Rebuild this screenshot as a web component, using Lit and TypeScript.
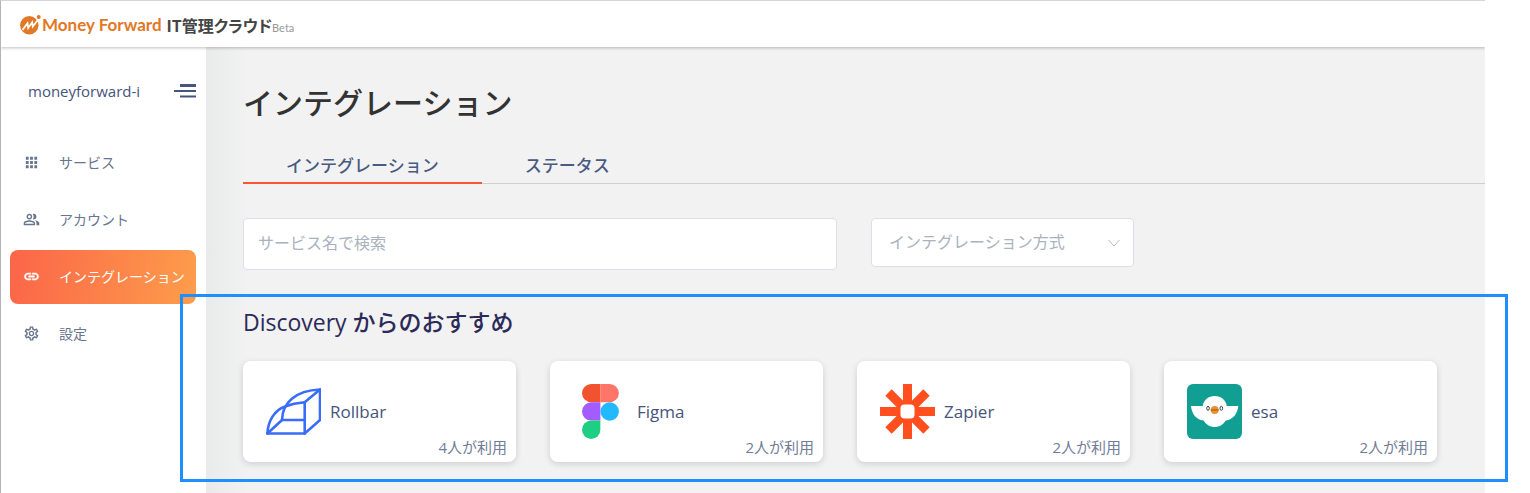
import { LitElement, html, css, svg } from "lit";
import { customElement, state } from "lit/decorators.js";
import { classMap } from "lit/directives/class-map.js";

const icons = {
  grid: svg`<path d="M4 8h4V4H4v4zm6 12h4v-4h-4v4zm-6 0h4v-4H4v4zm0-6h4v-4H4v4zm6 0h4v-4h-4v4zm6-10v4h4V4h-4zm-6 4h4V4h-4v4zm6 6h4v-4h-4v4zm0 6h4v-4h-4v4z"/>`,
  people: svg`<path d="M16.67 13.13C18.04 14.06 19 15.32 19 17v3h4v-3c0-2.18-3.57-3.47-6.33-3.87zM15 12c2.21 0 4-1.79 4-4s-1.79-4-4-4c-.47 0-.91.1-1.33.24C14.5 5.27 15 6.58 15 8s-.5 2.73-1.33 3.76c.42.14.86.24 1.33.24zM9 12c2.21 0 4-1.79 4-4s-1.79-4-4-4-4 1.79-4 4 1.79 4 4 4zm0-6c1.1 0 2 .9 2 2s-.9 2-2 2-2-.9-2-2 .9-2 2-2zm0 7c-2.67 0-8 1.34-8 4v3h16v-3c0-2.66-5.33-4-8-4zm6 5H3v-.99C3.2 16.29 6.3 15 9 15s5.8 1.29 6 2v1z"/>`,
  link: svg`<path stroke="currentColor" stroke-width=".7" d="M3.900 12c0-1.710 1.390-3.100 3.100-3.100h4V7H7c-2.760 0-5 2.240-5 5s2.240 5 5 5h4v-1.900H7c-1.710 0-3.100-1.390-3.100-3.100zM8 13h8v-2H8v2zm9-6h-4v1.900h4c1.710 0 3.100 1.390 3.100 3.100s-1.390 3.100-3.100 3.100h-4V17h4c2.760 0 5-2.240 5-5s-2.240-5-5-5z"/>`,
  gear: svg`<path d="M19.430 12.980c.04-.32.07-.64.07-.98s-.03-.66-.07-.98l2.110-1.650c.19-.15.24-.42.12-.64l-2-3.460c-.12-.22-.39-.3-.61-.22l-2.490 1c-.52-.4-1.080-.73-1.690-.98l-.38-2.650C14.460 2.180 14.250 2 14 2h-4c-.25 0-.46.18-.49.42l-.38 2.650c-.61.25-1.170.59-1.690.98l-2.490-1c-.23-.09-.49 0-.61.22l-2 3.460c-.13.22-.07.49.12.64l2.110 1.650c-.04.32-.07.65-.07.98s.03.66.07.98l-2.110 1.650c-.19.15-.24.42-.12.64l2 3.460c.12.22.39.3.61.22l2.490-1c.52.4 1.080.73 1.690.98l.38 2.650c.03.24.24.42.49.42h4c.25 0 .46-.18.49-.42l.38-2.650c.61-.25 1.170-.59 1.690-.98l2.490 1c.23.09.49 0 .61-.22l2-3.460c.12-.22.07-.49-.12-.64l-2.110-1.650zm-1.980-1.710c.04.31.05.52.05.73 0 .21-.02.43-.05.73l-.14 1.130.89.7 1.080.84-.7 1.210-1.270-.51-1.040-.42-.9.68c-.43.32-.84.56-1.250.73l-1.060.43-.16 1.130-.2 1.350h-1.400l-.19-1.350-.16-1.130-1.060-.43c-.43-.18-.83-.41-1.230-.71l-.91-.7-1.060.43-1.270.51-.7-1.210 1.080-.84.89-.7-.14-1.130c-.03-.31-.05-.54-.05-.74s.02-.43.05-.73l.14-1.130-.89-.7-1.080-.84.7-1.210 1.270.51 1.040.42.9-.68c.43-.32.84-.56 1.250-.73l1.060-.43.16-1.130.2-1.350h1.390l.19 1.350.16 1.130 1.060.43c.43.18.83.41 1.230.71l.91.7 1.060-.43 1.270-.51.7 1.210-1.070.85-.89.7.14 1.130zM12 8c-2.210 0-4 1.790-4 4s1.790 4 4 4 4-1.790 4-4-1.790-4-4-4zm0 6c-1.100 0-2-.9-2-2s.9-2 2-2 2 .9 2 2-.9 2-2 2z"/>`,
};

const logos = {
  rollbar: svg`<g fill="none" stroke="#3a6cfb" stroke-width="2.600" stroke-linejoin="round" stroke-linecap="round">
      <path d="M1.400 49.500C2 37 8.500 26 19 22.500 25 20.300 31.500 19 38.700 18.300V49.500Z"/>
      <path d="M16 36C16.500 19 29 6.500 54 5.500V36L38.700 49.500"/>
      <path d="M38.700 18.300 54 5.500M1.400 49.500 16 36H38.700"/>
    </g>`,
  figma: svg`<g transform="translate(-3 0)">
      <path fill="#f0532d" d="M27.500 0H21.200a9.150 9.150 0 0 0 0 18.300H30.400V0Z"/>
      <path fill="#ff7568" d="M30.400 0H39.700a9.150 9.150 0 0 1 0 18.300H30.400Z"/>
      <path fill="#a35cff" d="M30.400 18.300H21.200a9.150 9.150 0 0 0 0 18.300H30.400Z"/>
      <circle fill="#22b9ff" cx="39.700" cy="27.450" r="9.200"/>
      <path fill="#1ecf83" d="M30.400 36.600H21.200a9.200 9.200 0 1 0 9.200 9.200Z"/>
    </g>`,
  zapier: svg`<g stroke="#ff4f1f" stroke-width="9">
      <path d="M27.500 0V55M0 27.500H55M8.500 8.500 46.500 46.500M46.500 8.500 8.500 46.500"/>
    </g>
    <rect x="17" y="17" width="21" height="21" fill="#ff4f1f"/>
    <rect x="20.500" y="20.500" width="14" height="14" rx="4" fill="#fff"/>`,
  esa: svg`<rect width="55" height="55" rx="6" fill="#119f94"/>
    <path fill="#fff" d="M4 22H15.800C16.500 16 21.500 12 27.700 12S39 16 39.700 22H51.300C50.500 30 46 35.500 38.800 36.500 36 41 32 43 27.700 43S19.500 41 16.500 36.500C9 35.500 4.800 30 4 22Z"/>
    <g fill="none" stroke="#444" stroke-width="1">
      <ellipse cx="21" cy="24.300" rx="1.300" ry="2"/>
      <ellipse cx="34.300" cy="24.300" rx="1.300" ry="2"/>
    </g>
    <circle cx="27.700" cy="26" r="4" fill="#f09030"/>
    <path d="M23.700 26H31.700" stroke="#8a5a20" stroke-width="1"/>`,
};

type IconName = keyof typeof icons;
type LogoName = keyof typeof logos;

@customElement("service-card")
class ServiceCard extends LitElement {
  static properties = {
    name: { type: String },
    logo: { type: String },
    users: { type: Number },
  };
  declare name: string;
  declare logo: LogoName;
  declare users: number;

  static styles = css`
    :host {
      display: block;
      min-width: 0;
    }
    .card {
      display: block;
      padding: 23px 9px 7px 23px;
      border-radius: 8px;
      background: #fff;
      box-shadow: 0 2px 6px rgba(40, 50, 70, 0.18);
      color: #45557c;
      text-decoration: none;
    }
    .head {
      display: flex;
      align-items: center;
      gap: 9px;
    }
    .logo {
      width: 55px;
      height: 55px;
      flex: none;
    }
    .name {
      font-size: 17px;
      line-height: 24px;
    }
    .users {
      display: block;
      color: #717d98;
      font-size: 15px;
      line-height: 16px;
      text-align: right;
    }
  `;

  render() {
    return html`<a class="card" href="#">
      <span class="head">
        <svg class="logo" viewBox="0 0 55 55" aria-hidden="true">${logos[this.logo]}</svg>
        <span class="name">${this.name}</span>
      </span>
      <span class="users">${this.users}人が利用</span>
    </a>`;
  }
}

@customElement("app-root")
class AppRoot extends LitElement {
  @state() private tab = 0;

  private nav: { icon: IconName; label: string; active?: boolean }[] = [
    { icon: "grid", label: "サービス" },
    { icon: "people", label: "アカウント" },
    { icon: "link", label: "インテグレーション", active: true },
    { icon: "gear", label: "設定" },
  ];

  private services: { name: string; logo: LogoName; users: number }[] = [
    { name: "Rollbar", logo: "rollbar", users: 4 },
    { name: "Figma", logo: "figma", users: 2 },
    { name: "Zapier", logo: "zapier", users: 2 },
    { name: "esa", logo: "esa", users: 2 },
  ];

  static styles = css`
    :host {
      display: block;
      position: relative;
      box-sizing: border-box;
      min-height: 100vh;
      padding-right: 45px;
      background: #fff;
      font-family: "Open Sans", "Noto Sans CJK JP", sans-serif;
    }
    *,
    *::before {
      box-sizing: border-box;
    }
    .window {
      display: flex;
      flex-direction: column;
      min-height: 100vh;
      overflow: hidden;
      border-top: 1px solid #d5d5db;
      border-left: 1px solid #b4b4b8;
    }
    .topbar {
      position: relative;
      display: flex;
      align-items: center;
      height: 46px;
      padding: 2px 19px 0;
      background: #fff;
      box-shadow: 0 1px 3px rgba(0, 0, 0, 0.25);
    }
    .brand {
      display: flex;
      align-items: center;
      color: #e27826;
      text-decoration: none;
    }
    .mark {
      width: 22px;
      height: 20px;
    }
    .brand-name {
      font: 700 17px/24px Lato, sans-serif;
    }
    .product {
      margin-left: 5px;
      color: #444;
      font: 700 16px/24px "Noto Sans CJK JP", sans-serif;
      font-feature-settings: "palt";
    }
    .beta {
      padding-top: 6px;
      color: #999;
      font: 400 11px/16px Lato, sans-serif;
    }
    .body {
      display: flex;
      flex: 1;
    }
    .sidebar {
      flex: none;
      width: 205px;
      padding: 30px 10px 0 9px;
      background: #fff;
    }
    .tenant {
      display: flex;
      align-items: center;
      justify-content: space-between;
      height: 28px;
      margin: 0 0 31px;
      padding-left: 18px;
      color: #45557c;
      font-size: 15px;
    }
    .toggle {
      width: 22px;
      height: 16px;
      padding: 0;
      border: 0;
      background: none;
      color: #45557c;
    }
    .toggle svg {
      display: block;
    }
    .nav {
      display: flex;
      flex-direction: column;
      gap: 3px;
    }
    .item {
      display: flex;
      align-items: center;
      gap: 19px;
      height: 54px;
      padding: 0 0 2px 13px;
      border-radius: 8px;
      color: #68758f;
      font-size: 14px;
      text-decoration: none;
      white-space: nowrap;
    }
    .item.active {
      background: linear-gradient(100deg, #fb6549, #fd9d4b);
      color: #fff;
    }
    .item svg {
      width: 17px;
      height: 17px;
      fill: currentColor;
    }
    .main {
      flex: 1;
      min-width: 0;
      padding: 34px 0 31px 37px;
      background: linear-gradient(90deg, #e9ebeb, #f2f2f2 44px);
    }
    .title {
      margin: 0;
      color: #333;
      font-size: 30px;
      font-weight: 500;
      line-height: 44px;
    }
    .tabs {
      display: flex;
      margin-top: 23px;
      box-shadow: inset 0 -1px #cfcfcf;
    }
    .tab {
      height: 36px;
      padding: 2px 43px 0;
      border: 0;
      border-bottom: 2px solid transparent;
      background: none;
      color: #4a5a82;
      font: inherit;
      font-size: 17px;
      font-weight: 500;
      line-height: 32px;
    }
    .tab.active {
      border-color: #ff5533;
    }
    .content {
      padding-right: 48px;
    }
    .filters {
      display: grid;
      grid-template-columns: minmax(0, 594px) 263px;
      align-items: start;
      gap: 34px;
      margin-top: 34px;
    }
    .search,
    .method {
      width: 100%;
      border: 1px solid #dcdfe6;
      border-radius: 4px;
      background: #fff;
      color: #a9b2be;
      font: inherit;
      font-size: 16px;
    }
    .search {
      height: 52px;
      padding: 0 14px 2px;
    }
    .search::placeholder {
      color: #a9b2be;
      opacity: 1;
    }
    .select {
      display: grid;
      align-items: center;
    }
    .select > * {
      grid-area: 1 / 1;
    }
    .method {
      height: 49px;
      padding: 0 17px 2px;
      appearance: none;
    }
    .chevron {
      justify-self: end;
      width: 12px;
      height: 8px;
      margin-right: 14px;
      fill: none;
      stroke: #b4bac6;
      pointer-events: none;
    }
    .section {
      margin: 36px 0 23px;
      color: #2b2a58;
      font-size: 23px;
      font-weight: 500;
      line-height: 32px;
    }
    .cards {
      display: grid;
      grid-template-columns: repeat(4, minmax(0, 1fr));
      gap: 34px;
    }
    .highlight {
      position: absolute;
      top: 294px;
      right: 22px;
      bottom: 11px;
      left: 180px;
      border: 3px solid #1e8fff;
      pointer-events: none;
    }
  `;

  render() {
    return html`
      <div class="window">
        <header class="topbar">
          <a class="brand" href="#">
            <svg class="mark" viewBox="0 0 22 20" aria-hidden="true">
              <circle cx="9.300" cy="10.200" r="9.200" fill="currentColor" />
              <circle cx="18.700" cy="2" r="3.200" fill="#fff" />
              <circle cx="18.700" cy="2" r="2" fill="currentColor" />
              <path d="M2.500 15 7.500 8.200 8.200 13 12.200 7.300 12.800 11.500 17.500 5.500" fill="none" stroke="#fff" stroke-width="1.800" />
            </svg>
            <span class="brand-name">Money Forward</span>
            <span class="product">IT管理クラウド</span>
            <span class="beta">Beta</span>
          </a>
        </header>
        <div class="body">
          <aside class="sidebar">
            <div class="tenant">
              <span>moneyforward-i</span>
              <button class="toggle" aria-label="メニュー">
                <svg width="22" height="16" viewBox="0 0 22 16" fill="currentColor">
                  <path d="M6 1H22V4H6ZM0 7H22V9H0ZM6 12.500H22V14.500H6Z" />
                </svg>
              </button>
            </div>
            <nav class="nav">
              ${this.nav.map(
                (n) => html`<a class=${classMap({ item: true, active: !!n.active })} href="#">
                  <svg viewBox="0 0 24 24" aria-hidden="true">${icons[n.icon]}</svg>
                  <span>${n.label}</span>
                </a>`
              )}
            </nav>
          </aside>
          <main class="main">
            <h1 class="title">インテグレーション</h1>
            <div class="tabs" role="tablist">
              ${["インテグレーション", "ステータス"].map(
                (t, i) => html`<button
                  role="tab"
                  aria-selected=${i === this.tab}
                  class=${classMap({ tab: true, active: i === this.tab })}
                  @click=${() => (this.tab = i)}
                >${t}</button>`
              )}
            </div>
            <div class="content">
              <div class="filters">
                <input class="search" type="search" aria-label="サービス名で検索" placeholder="サービス名で検索" />
                <div class="select">
                  <select class="method" aria-label="インテグレーション方式">
                    <option>インテグレーション方式</option>
                  </select>
                  <svg class="chevron" viewBox="0 0 12 8"><path d="M0.500 1 6 7 11.500 1" /></svg>
                </div>
              </div>
              <h2 class="section">Discovery からのおすすめ</h2>
              <div class="cards">
                ${this.services.map(
                  (s) => html`<service-card .name=${s.name} .logo=${s.logo} .users=${s.users}></service-card>`
                )}
              </div>
            </div>
          </main>
        </div>
      </div>
      <div class="highlight"></div>
    `;
  }
}
